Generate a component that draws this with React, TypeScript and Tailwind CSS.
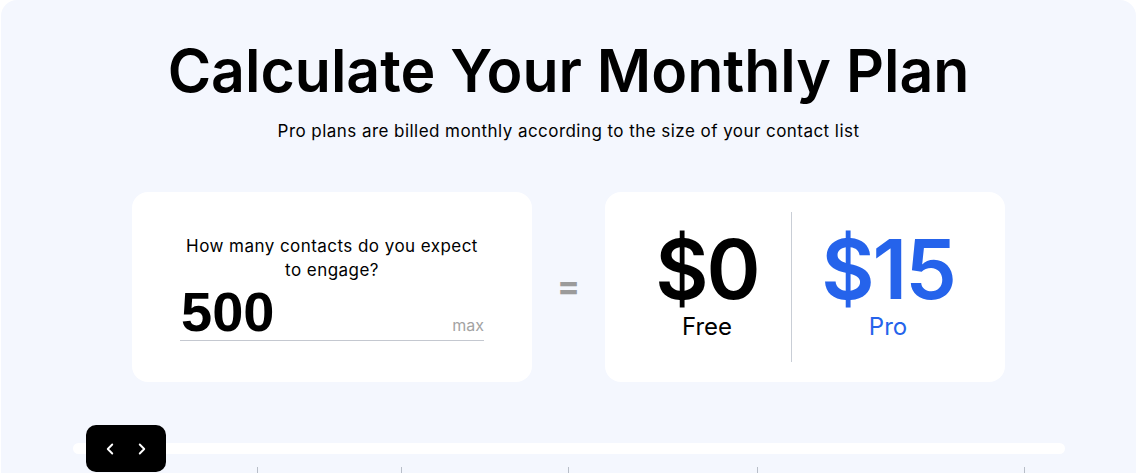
import { ChevronLeft, ChevronRight } from 'lucide-react';

// tick offsets along the slider track, in px from the track's left edge
const TICKS = [184, 328, 495, 684, 951];

export default function App() {
  return (
    <div className="min-h-screen bg-white">
      <section className="ml-px w-[1135px] h-[473px] overflow-hidden rounded-t-2xl bg-[#f4f7fe] font-['Inter',sans-serif] text-black">
        {/* Heading */}
        <h1 className="pt-[36px] text-center text-[59px] font-semibold leading-[70px]">
          Calculate Your Monthly Plan
        </h1>
        <p className="mt-[13px] text-center text-[17px] leading-[24px] tracking-[0.45px]">
          Pro plans are billed monthly according to the size of your contact list
        </p>

        {/* Calculator row */}
        <div className="mt-[49px] flex justify-center">
          <div className="flex h-[190px] w-[400px] flex-col items-center rounded-2xl bg-white pt-[42px]">
            <p className="text-center text-[17px] leading-[24px] tracking-[0.45px]">
              How many contacts do you expect
              <br />
              to engage?
            </p>
            <div className="mt-[2px] flex w-[304px] items-baseline justify-between border-b border-[#c4c8d0]">
              <span className="pl-px font-['Liberation_Sans',Arial,sans-serif] text-[56px] font-bold leading-none">
                500
              </span>
              <span className="text-[16px] leading-none text-[#a3a3a3]">max</span>
            </div>
          </div>

          <div className="flex w-[73px] items-center justify-center pb-[3px] text-[34px] font-bold text-[#9b9b9b]">
            =
          </div>

          <div className="flex h-[190px] w-[400px] items-stretch rounded-2xl bg-white py-5 pl-[18px]">
            <div className="flex w-[168px] flex-col items-center justify-center pb-[3px]">
              <span className="text-[82px] font-semibold leading-none tracking-[-2px]">$0</span>
              <span className="text-[24px] leading-[32px]">Free</span>
            </div>
            <div className="w-px bg-[#c9ced6]" />
            <div className="flex w-[196px] flex-col items-center justify-center pb-[3px] pr-[4px] text-[#2563eb]">
              <span className="text-[82px] font-semibold leading-none tracking-[-2px]">$15</span>
              <span className="text-[24px] leading-[32px]">Pro</span>
            </div>
          </div>
        </div>

        {/* Slider */}
        <div className="relative mx-auto mt-[61px] h-[11px] w-[992px] rounded-full bg-white">
          <div className="absolute left-[13px] top-[-18px] flex h-[47px] w-[80px] items-center justify-center gap-[14px] rounded-[10px] bg-black text-white">
            <ChevronLeft size={18} strokeWidth={2.5} />
            <ChevronRight size={18} strokeWidth={2.5} />
          </div>
        </div>
        <div className="relative mx-auto mt-[13px] h-[8px] w-[992px]">
          {TICKS.map((x) => (
            <div key={x} className="absolute top-0 h-[8px] w-px bg-[#b8bec8]" style={{ left: x }} />
          ))}
        </div>
      </section>
    </div>
  );
}
